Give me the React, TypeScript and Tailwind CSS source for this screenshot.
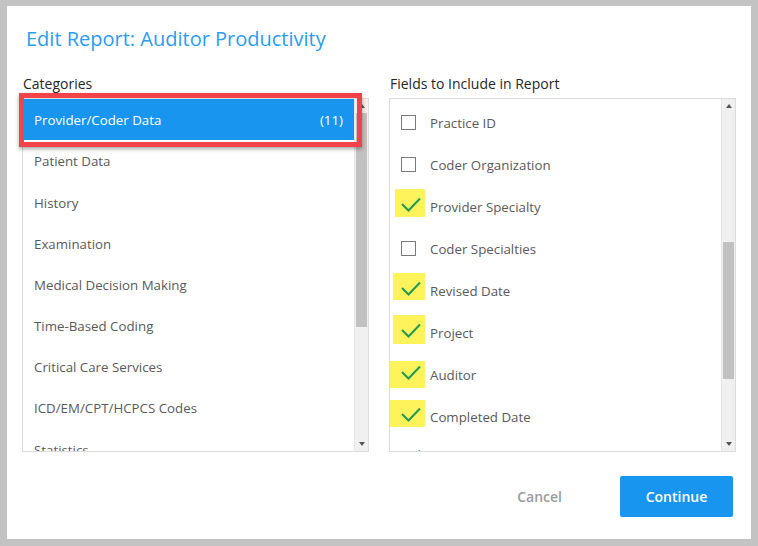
import React from "react";

const categories = [
  "Provider/Coder Data",
  "Patient Data",
  "History",
  "Examination",
  "Medical Decision Making",
  "Time-Based Coding",
  "Critical Care Services",
  "ICD/EM/CPT/HCPCS Codes",
  "Statistics",
];

type Field = {
  label: string;
  checked: boolean;
  hl?: { left: number; top: number; w: number; h: number };
  blue?: boolean;
};

const fields: Field[] = [
  { label: "Practice ID", checked: false },
  { label: "Coder Organization", checked: false },
  { label: "Provider Specialty", checked: true, hl: { left: 5, top: 4, w: 30, h: 28 } },
  { label: "Coder Specialties", checked: false },
  { label: "Revised Date", checked: true, hl: { left: 3, top: 4, w: 32, h: 27 } },
  { label: "Project", checked: true, hl: { left: 3, top: 4, w: 32, h: 29 } },
  { label: "Auditor", checked: true, hl: { left: 0, top: 8, w: 35, h: 27 } },
  { label: "Completed Date", checked: true, hl: { left: -2, top: 5, w: 37, h: 27 } },
  { label: "Audit Status", checked: true, blue: true },
];

function Check({ color }: { color: string }) {
  return (
    <svg width="22" height="18" viewBox="0 0 22 18" className="block">
      <path d="M2 8 L8.5 14.5 L20 2.5" fill="none" stroke={color} strokeWidth="2" />
    </svg>
  );
}

function Scrollbar({ thumbTop, thumbH }: { thumbTop: number; thumbH: number }) {
  return (
    <div className="w-[14px] h-full bg-[#f0f0f0] flex flex-col items-stretch border-l border-[#e6e6e6]">
      <div className="h-[14px] flex items-center justify-center shrink-0">
        <div className="w-0 h-0 border-l-[3px] border-r-[3px] border-b-[4px] border-l-transparent border-r-transparent border-b-[#555]" />
      </div>
      <div className="flex-1 relative">
        <div
          className="bg-[#c1c1c1] mx-[1px]"
          style={{ marginTop: thumbTop, height: thumbH }}
        />
      </div>
      <div className="h-[14px] flex items-center justify-center shrink-0">
        <div className="w-0 h-0 border-l-[3px] border-r-[3px] border-t-[4px] border-l-transparent border-r-transparent border-t-[#555]" />
      </div>
    </div>
  );
}

export default function App() {
  return (
    <div
      className="w-[758px] h-[546px] bg-[#c3c3c3] pt-[6px] pl-[7px] pr-[7px] pb-[7px]"
      style={{ fontFamily: '"Open Sans", "Noto Sans", sans-serif' }}
    >
      <div className="w-full h-full bg-white flex flex-col pl-[15px] pr-[15px]">
        <div className="pt-[19px] pl-[4px] text-[20px] leading-[28px] text-[#2b9cf2]">
          Edit Report: Auditor Productivity
        </div>
        <div className="flex gap-[20px] mt-[21px]">
          {/* Left column */}
          <div className="w-[347px]">
            <div className="text-[14px] leading-[20px] font-medium text-[#262626] pl-[1px]">Categories</div>
            <div className="relative mt-[4px] h-[354px] border border-[#dcdcdc] flex">
              <div className="flex-1 overflow-hidden">
                {categories.map((c, i) => (
                  <div
                    key={c}
                    className={
                      "h-[41.2px] flex items-center justify-between pl-[11px] pr-[11px] text-[13.3px] pt-[3px] " +
                      (i === 0 ? "bg-[#1895ef] text-white" : "text-[#5a5a5a]")
                    }
                  >
                    <span>{c}</span>
                    {i === 0 && <span>(11)</span>}
                  </div>
                ))}
              </div>
              <Scrollbar thumbTop={0} thumbH={214} />
              <div className="absolute left-[-4px] top-[-6px] w-[343px] h-[54px] border-[5px] border-[#f2434b] shadow-[0_2px_4px_rgba(0,0,0,0.35)] pointer-events-none" />
            </div>
          </div>
          {/* Right column */}
          <div className="w-[347px]">
            <div className="text-[14px] leading-[20px] font-medium text-[#262626] pl-[1px]">Fields to Include in Report</div>
            <div className="mt-[4px] h-[354px] border border-[#dcdcdc] flex">
              <div className="flex-1 overflow-hidden pt-[2px]">
                {fields.map((f) => (
                  <div key={f.label} className="relative h-[42px] flex items-center text-[13.3px] text-[#5a5a5a]">
                    {f.hl && (
                      <div
                        className="absolute bg-[#fff35c]"
                        style={{ left: f.hl.left, top: f.hl.top, width: f.hl.w, height: f.hl.h }}
                      />
                    )}
                    <div className="relative w-[40px] flex items-center pl-[11px]">
                      {f.checked ? (
                        <div className="ml-[-1px] mt-[-3px]">
                          <Check color={f.blue ? "#2b8ee8" : "#1f9a55"} />
                        </div>
                      ) : (
                        <div className="w-[15px] h-[15px] border-[1.5px] border-[#7a7a7a]" />
                      )}
                    </div>
                    <span className="relative pt-[3px]">{f.label}</span>
                  </div>
                ))}
              </div>
              <Scrollbar thumbTop={129} thumbH={137} />
            </div>
          </div>
        </div>
        <div className="flex justify-end items-center mt-[24px] pr-[3px] gap-[58px]">
          <button className="text-[14px] font-semibold text-[#9b9b9b]">Cancel</button>
          <button className="w-[113px] h-[41px] rounded-[2px] bg-[#1895ef] text-white text-[14px] font-semibold">
            Continue
          </button>
        </div>
      </div>
    </div>
  );
}
